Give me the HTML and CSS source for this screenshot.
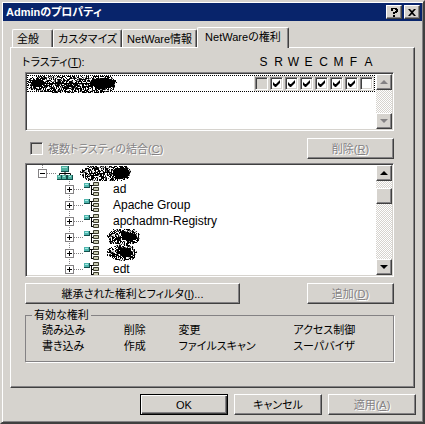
FILE: index.html
```html
<!DOCTYPE html>
<html lang="ja">
<head>
  <meta charset="UTF-8" />
  <meta name="viewport" content="width=device-width, initial-scale=1.0" />
  <title>Adminのプロパティ</title>
  <link rel="stylesheet" href="styles.css">
</head>
<body>
  <!-- shared icons -->
  <svg class="defs" width="0" height="0" aria-hidden="true">
    <filter id="grain" x="0" y="0" width="100%" height="100%">
      <feTurbulence type="fractalNoise" baseFrequency="0.7" numOctaves="2" seed="4" />
      <feColorMatrix values="0 0 0 0 0  0 0 0 0 0  0 0 0 0 0  14 0 0 0 -6.5" />
      <feComposite in2="SourceGraphic" operator="in" />
    </filter>
    <symbol id="icon-tree" viewBox="0 0 16 16">
      <path d="M8 6v4M2.500 11V8.500h11V11" fill="none" stroke="#000" />
      <path d="M4 1h8v6H4zM0 10h5v5H0zM5 10h5v5H5zM10 10h6v5h-6z" fill="#124f4b" />
      <path d="M4 1h7v5H4zM0 10h4v4H0zM5 10h4v4H5zM11 10h4v4h-4z" fill="#4fae9f" />
      <path d="M5 2h5v1H5zM1 11h2v1H1zM6 11h2v1H6zM12 11h2v1h-2z" fill="#9fe3d6" />
    </symbol>
    <symbol id="icon-unit" viewBox="0 0 16 16">
      <path d="M5 4.500h5M7.500 4v10M8 8.500h3M8 13.500h3" fill="none" stroke="#000" />
      <path d="M0 2h6v5H0z" fill="#124f4b" />
      <path d="M0 2h5v4H0z" fill="#4fb5ad" />
      <path d="M1 3h3v1H1z" fill="#a5ece4" />
      <path d="M10 1h5v4h-5zM10 6h5v4h-5zM10 11h5v4h-5z" fill="#c9cbb2" />
      <path d="M9.500 1.500h5v3h-5zM9.500 6.500h5v3h-5zM9.500 11.500h5v3h-5z" fill="none" stroke="#3a3a2c" />
    </symbol>
  </svg>

  <header class="title-bar">
    <h1>Adminのプロパティ</h1>
    <button type="button" class="title-button" aria-label="ヘルプ">
      <svg width="8" height="9" viewBox="0 0 8 9"><path d="M1 0h6v1h1v3H7v1H5v1H3V4h2V3h1V2H5V1H3v2H1zM3 7h2v2H3z" /></svg>
    </button>
    <button type="button" class="title-button close" aria-label="閉じる">
      <svg width="8" height="7" viewBox="0 0 8 7"><path d="M0 0h2l2 2 2-2h2L5 3.500 8 7H6L4 5 2 7H0l3-3.500z" /></svg>
    </button>
  </header>

  <main class="content">
    <nav class="tabs" role="tablist">
      <button type="button" class="tab" role="tab">全般</button>
      <button type="button" class="tab" role="tab">カスタマイズ</button>
      <button type="button" class="tab" role="tab">NetWare情報</button>
      <button type="button" class="tab active" role="tab" aria-selected="true">NetWareの権利</button>
    </nav>

    <section class="panel">
      <div class="list-header">
        <span class="list-label">トラスティ(<u>T</u>):</span>
        <span class="flag">S</span>
        <span class="flag">R</span>
        <span class="flag">W</span>
        <span class="flag">E</span>
        <span class="flag">C</span>
        <span class="flag">M</span>
        <span class="flag">F</span>
        <span class="flag">A</span>
      </div>

      <div class="box trustees">
        <div class="box-body">
          <div class="trustee">
            <svg class="scribble" width="90" height="18" viewBox="0 0 90 18">
              <g filter="url(#grain)"><path d="M0 3l10-2h74l5 6-3 8-12 3H30l-14-1L0 14z" /></g>
              <path d="M4 5l8-1 5 3-4 5-9-1zM64 5l10-2 9 1 4 4-4 5-12 1-8-4z" />
              <path class="strokes" d="M1 4l6 10 3-11 7 14 3-12 7 12 4-13 6 13 5-11 5 11 5-13 7 13 6-14 8 14 7-13 6 9M3 8l80 1M8 15l22-8 20 7 36-9" />
            </svg>
            <span class="flags">
              <input type="checkbox" class="check" aria-label="S" disabled>
              <input type="checkbox" class="check" aria-label="R" checked>
              <input type="checkbox" class="check" aria-label="W" checked>
              <input type="checkbox" class="check" aria-label="E" checked>
              <input type="checkbox" class="check" aria-label="C" checked>
              <input type="checkbox" class="check" aria-label="M" checked>
              <input type="checkbox" class="check" aria-label="F" checked>
              <input type="checkbox" class="check" aria-label="A">
            </span>
          </div>
        </div>
        <div class="scrollbar">
          <button type="button" class="scroll-button" aria-label="上へ" disabled><svg width="8" height="4"><path d="M0 4l4-4 4 4z" /></svg></button>
          <button type="button" class="scroll-button" aria-label="下へ" disabled><svg width="8" height="4"><path d="M0 0h8L4 4z" /></svg></button>
        </div>
      </div>

      <div class="row combine-row">
        <label class="combine"><input type="checkbox" class="check" disabled>複数トラスティの結合(<u>C</u>)</label>
        <button type="button" class="button" disabled>削除(<u>R</u>)</button>
      </div>

      <div class="box tree">
        <div class="box-body">
          <div class="node root">
            <span class="branch"><button type="button" class="expander" aria-label="閉じる"></button></span>
            <span class="dots"></span>
            <svg class="icon" width="16" height="16"><use href="#icon-tree" /></svg>
            <svg class="scribble" width="52" height="16" viewBox="0 0 52 16">
              <g filter="url(#grain)"><path d="M0 6l8-5h38l5 5-2 7-8 3H8L0 10z" /></g>
              <path d="M34 4l8-2 7 3 1 4-5 4-8 1-4-5z" />
              <path class="strokes" d="M1 8l7-5 4 11 5-12 5 12 5-11 5 12 4-12 5 11 8-9M6 12l22-5 20 6" />
            </svg>
          </div>
          <ul class="children">
            <li class="node">
              <span class="branch"><button type="button" class="expander plus" aria-label="開く"></button></span>
              <span class="dots"></span>
              <svg class="icon" width="16" height="16"><use href="#icon-unit" /></svg>
              <span class="name">ad</span>
            </li>
            <li class="node">
              <span class="branch"><button type="button" class="expander plus" aria-label="開く"></button></span>
              <span class="dots"></span>
              <svg class="icon" width="16" height="16"><use href="#icon-unit" /></svg>
              <span class="name">Apache Group</span>
            </li>
            <li class="node">
              <span class="branch"><button type="button" class="expander plus" aria-label="開く"></button></span>
              <span class="dots"></span>
              <svg class="icon" width="16" height="16"><use href="#icon-unit" /></svg>
              <span class="name">apchadmn-Registry</span>
            </li>
            <li class="node">
              <span class="branch"><button type="button" class="expander plus" aria-label="開く"></button></span>
              <span class="dots"></span>
              <svg class="icon" width="16" height="16"><use href="#icon-unit" /></svg>
              <svg class="scribble" width="34" height="16" viewBox="0 0 34 16">
                <g filter="url(#grain)"><path d="M0 6l7-6h20l7 6-3 8-12 2-16-1z" /></g>
                <path d="M14 5l7-2 8 3 1 4-9 2-6-3z" />
                <path class="strokes" d="M1 9l6-7 4 12 5-12 5 12 5-12 6 10M3 13l12-5 15 6" />
              </svg>
            </li>
            <li class="node">
              <span class="branch"><button type="button" class="expander plus" aria-label="開く"></button></span>
              <span class="dots"></span>
              <svg class="icon" width="16" height="16"><use href="#icon-unit" /></svg>
              <svg class="scribble" width="30" height="16" viewBox="0 0 30 16">
                <g filter="url(#grain)"><path d="M0 4l9-4h16l5 7-4 8-14 1-12-5z" /></g>
                <path d="M12 6l8-3 6 4-2 4-7 2-5-4z" />
                <path class="strokes" d="M1 4l8 10 3-12 6 13 4-12 6 10M2 11l13-3 13 5" />
              </svg>
            </li>
            <li class="node">
              <span class="branch"><button type="button" class="expander plus" aria-label="開く"></button></span>
              <span class="dots"></span>
              <svg class="icon" width="16" height="16"><use href="#icon-unit" /></svg>
              <span class="name">edt</span>
            </li>
          </ul>
        </div>
        <div class="scrollbar">
          <button type="button" class="scroll-button" aria-label="上へ"><svg width="8" height="4"><path d="M0 4l4-4 4 4z" /></svg></button>
          <div class="thumb"></div>
          <button type="button" class="scroll-button" aria-label="下へ"><svg width="8" height="4"><path d="M0 0h8L4 4z" /></svg></button>
        </div>
      </div>

      <div class="row action-row">
        <button type="button" class="button wide">継承された権利とフィルタ(<u>I</u>)...</button>
        <button type="button" class="button" disabled>追加(<u>D</u>)</button>
      </div>

      <fieldset class="rights">
        <legend>有効な権利</legend>
        <div class="rights-grid">
          <span>読み込み</span>
          <span>削除</span>
          <span>変更</span>
          <span>アクセス制御</span>
          <span>書き込み</span>
          <span>作成</span>
          <span>ファイルスキャン</span>
          <span>スーパバイザ</span>
        </div>
      </fieldset>
    </section>
  </main>

  <footer class="footer">
    <button type="button" class="button default">OK</button>
    <button type="button" class="button">キャンセル</button>
    <button type="button" class="button" disabled>適用(<u>A</u>)</button>
  </footer>
</body>
</html>
```

FILE: styles.css
```css
* {
  box-sizing: border-box;
}
body {
  margin: 0;
  min-height: 100vh;
  padding: 1px;
  border: 2px solid;
  border-color: #d6d3ce #404040 #404040 #d6d3ce;
  box-shadow: inset 1px 1px #fff, inset -1px -1px #848284;
  background: #d6d3ce;
  color: #000;
  font: 11px/16px "Liberation Sans", "Noto Sans CJK JP", sans-serif;
  font-feature-settings: "palt";
}
button,
input {
  margin: 0;
  padding: 0;
  color: inherit;
  font: inherit;
  font-feature-settings: inherit;
}
svg {
  display: block;
  flex: none;
}
.defs {
  position: absolute;
}

/* title bar */
.title-bar {
  display: flex;
  align-items: center;
  height: 18px;
  padding: 0 2px 0 3px;
  background: #08246b;
  color: #fff;
}
.title-bar h1 {
  flex: 1;
  margin: 0;
  font-size: 11px;
  font-weight: 700;
}
.title-button {
  display: flex;
  align-items: center;
  justify-content: center;
  width: 16px;
  height: 14px;
  border: 1px solid;
  border-color: #fff #404040 #404040 #fff;
  box-shadow: inset -1px -1px #848284;
  background: #d6d3ce;
}
.title-button.close {
  margin-left: 2px;
}

/* tabs */
.content {
  padding: 6px 7px 0;
}
.tabs {
  display: flex;
  align-items: flex-end;
  padding-left: 2px;
}
.tab {
  min-width: 41px;
  height: 18px;
  padding: 0 4px;
  border: 1px solid;
  border-color: #fff #404040 transparent #fff;
  border-bottom: 0;
  border-radius: 2px 2px 0 0;
  box-shadow: inset -1px 0 #848284;
  background: #d6d3ce;
  text-align: left;
  white-space: nowrap;
}
.tab.active {
  position: relative;
  height: 21px;
  margin-bottom: -1px;
  padding: 0 7px 3px;
}
.panel {
  padding: 6px 20px 25px 14px;
  border: 1px solid;
  border-color: #fff #404040 #404040 #fff;
  box-shadow: inset -1px -1px #848284;
}

/* sunken list boxes */
.list-header {
  display: flex;
  height: 18px;
  margin-left: -3px;
  padding-right: 18px;
}
.list-label {
  flex: 1;
}
.flag {
  width: 15px;
  font-size: 12px;
  text-align: center;
}
.box {
  display: flex;
  border: 1px solid;
  border-color: #848284 #fff #fff #848284;
  background: #fff;
  box-shadow: inset 1px 1px #404040, inset -1px -1px #d6d3ce;
  padding: 1px;
}
.box-body {
  flex: 1;
  overflow: hidden;
}
.trustees {
  height: 59px;
}
.tree {
  height: 114px;
  margin-top: 4px;
}
.trustee {
  display: flex;
  align-items: center;
  justify-content: space-between;
  height: 17px;
  margin: 1px 1px 0 0;
  border: 1px dotted #000;
}
.flags {
  display: flex;
  gap: 2px;
  padding: 1px;
  background: #d6d3ce;
}
.check {
  appearance: none;
  flex: none;
  width: 13px;
  height: 13px;
  border: 1px solid;
  border-color: #848284 #fff #fff #848284;
  box-shadow: inset 1px 1px #404040, inset -1px -1px #d6d3ce;
  background: #fff;
}
.check:checked {
  background: #fff url("data:image/svg+xml,%3Csvg xmlns='http://www.w3.org/2000/svg' width='7' height='7'%3E%3Cpath d='M0 2l2 2h1l4-4v3L3 7H2L0 5z'/%3E%3C/svg%3E") center no-repeat;
}
.check:disabled {
  background: #d6d3ce;
}
.scribble path {
  shape-rendering: crispEdges;
}
.scribble .strokes {
  fill: none;
  stroke: #000;
}

/* scrollbars */
.scrollbar {
  display: flex;
  flex-direction: column;
  width: 16px;
  background: repeating-conic-gradient(#fff 0 25%, #d6d3ce 0 50%) 0 0 / 2px 2px;
}
.scroll-button,
.thumb {
  display: flex;
  align-items: center;
  justify-content: center;
  width: 16px;
  height: 16px;
  border: 1px solid;
  border-color: #fff #404040 #404040 #fff;
  box-shadow: inset -1px -1px #848284;
  background: #d6d3ce;
}
.scroll-button:last-child {
  margin-top: auto;
}
.scroll-button:disabled {
  fill: #848284;
}
.thumb {
  margin-top: 7px;
}

/* tree */
.node {
  display: flex;
  align-items: center;
  height: 16px;
}
.root {
  padding-left: 11px;
}
.children {
  margin: 0;
  padding: 0 0 0 38px;
  list-style: none;
}
.branch {
  display: flex;
  align-items: center;
  width: 9px;
  height: 16px;
  background: repeating-linear-gradient(#848284 0 1px, #fff 1px 2px) 4px 0 / 1px 16px no-repeat;
}
.root .branch {
  background-size: 1px 8px;
}
.expander {
  width: 9px;
  height: 9px;
  border: 1px solid #848284;
  background: linear-gradient(#000, #000) center / 5px 1px no-repeat #fff;
}
.expander.plus {
  background:
    linear-gradient(#000, #000) center / 5px 1px no-repeat,
    linear-gradient(#000, #000) center / 1px 5px no-repeat #fff;
}
.dots {
  width: 10px;
  height: 1px;
  background: repeating-linear-gradient(90deg, #848284 0 1px, #fff 1px 2px);
}
.name {
  margin-left: 13px;
  font-size: 12px;
}
.node .scribble {
  margin-left: 7px;
}

/* buttons */
.row {
  display: flex;
  align-items: center;
  justify-content: space-between;
}
.combine-row {
  margin-top: 7px;
}
.action-row {
  margin-top: 6px;
}
.combine {
  display: flex;
  align-items: center;
  padding-left: 5px;
  color: #848284;
  text-shadow: 1px 1px #fff;
}
.combine .check {
  margin-right: 5px;
}
.button {
  width: 87px;
  height: 21px;
  border: 1px solid;
  border-color: #fff #404040 #404040 #fff;
  box-shadow: inset -1px -1px #848284;
  background: #d6d3ce;
  white-space: nowrap;
}
.button.wide {
  width: 215px;
}
.button.default {
  border-color: #000;
  box-shadow: inset 1px 1px #fff, inset -1px -1px #404040, inset -2px -2px #848284;
}
.button:disabled {
  color: #848284;
  text-shadow: 1px 1px #fff;
}

/* effective rights */
.rights {
  min-width: 0;
  margin: 4px 0 0;
  padding: 0 0 7px 16px;
  border: 1px solid #848284;
  box-shadow: 1px 1px #fff;
}
.rights legend {
  margin-left: -10px;
  padding: 0 2px;
  background: #d6d3ce;
  line-height: 14px;
}
.rights-grid {
  display: grid;
  grid-template-columns: 82fr 55fr 115fr 100fr;
  white-space: nowrap;
}

.footer {
  display: flex;
  justify-content: flex-end;
  gap: 6px;
  padding: 6px 6px 6px 0;
}
.footer .button {
  width: 88px;
}
```
